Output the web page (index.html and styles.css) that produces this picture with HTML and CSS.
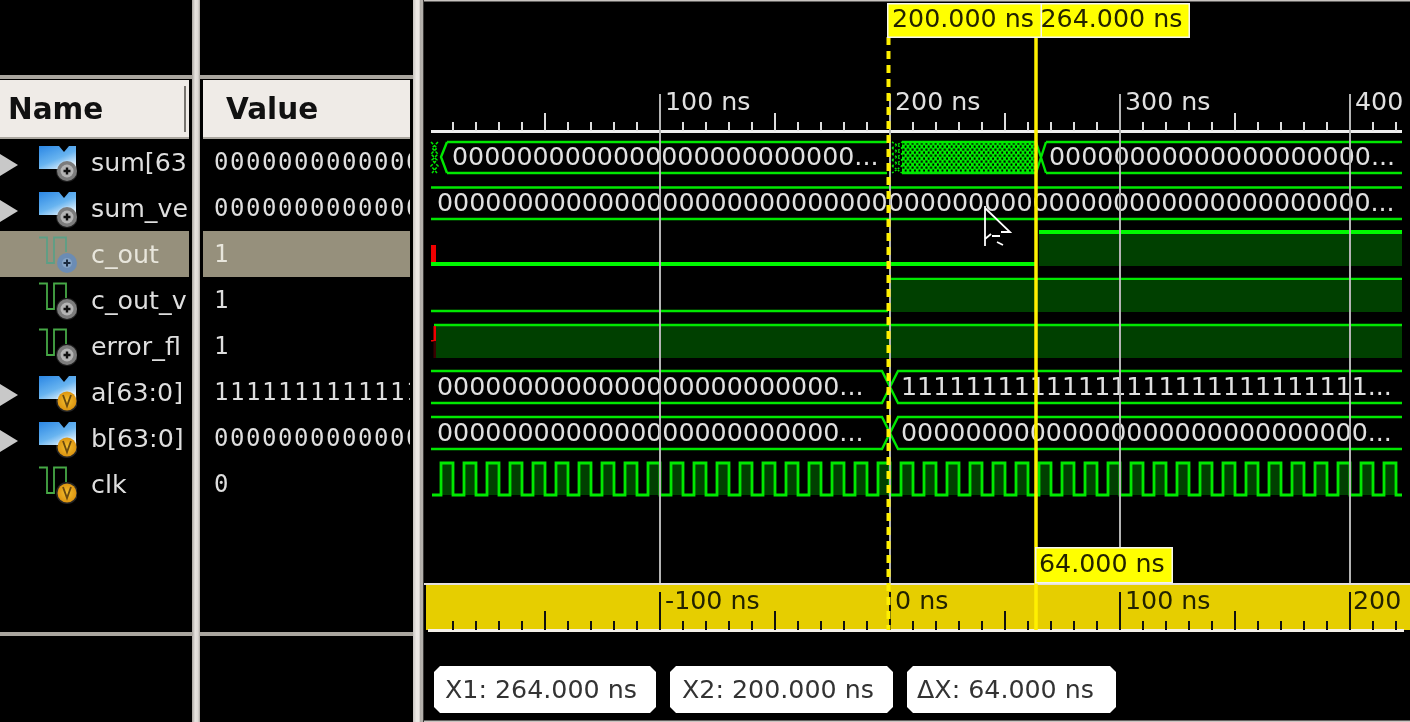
FILE: index.html
```html
<!DOCTYPE html>
<html lang="en">
<head>
<meta charset="utf-8">
<title>Waveform viewer</title>
<link rel="stylesheet" href="styles.css">
</head>
<body>
<svg class="defs" width="0" height="0" aria-hidden="true">
  <defs>
    <linearGradient id="blue" x1="0" y1="0" x2="0.7" y2="1">
      <stop offset="0" stop-color="#2a86e4"/>
      <stop offset="0.6" stop-color="#68b4f0"/>
      <stop offset="1" stop-color="#e4f2fc"/>
    </linearGradient>
    <radialGradient id="amber"><stop offset="0" stop-color="#f4c030"/><stop offset="1" stop-color="#dc9410"/></radialGradient>
    <symbol id="bus" viewBox="0 0 38 38"><path d="M0 2H20L25 8L30 2H37V25H0Z" fill="url(#blue)"/></symbol>
    <symbol id="pulse" viewBox="0 0 38 38"><path d="M0 1.500H8V27H15V1.500H27V16" fill="none" stroke="#46a846" stroke-width="1.800"/></symbol>
    <symbol id="pulse-sel" viewBox="0 0 38 38"><path d="M0 1.500H8V27H15V1.500H27V16" fill="none" stroke="#5c9f86" stroke-width="1.800"/></symbol>
    <symbol id="plus" viewBox="0 0 38 38"><circle cx="28" cy="27" r="11" fill="#fff" opacity="0.120"/><circle cx="28" cy="27" r="10" fill="#7c7c7c"/><circle cx="28" cy="27" r="6.500" fill="#b4b4b4"/><path d="M24.500 27H31.500M28 23.500V30.500" stroke="#101010" stroke-width="2.400"/></symbol>
    <symbol id="plus-sel" viewBox="0 0 38 38"><circle cx="28" cy="27" r="10" fill="#6b8cb4"/><circle cx="28" cy="27" r="5" fill="#86a4c6"/><path d="M24.500 27H31.500M28 23.500V30.500" stroke="#1c2c40" stroke-width="2"/></symbol>
    <symbol id="in" viewBox="0 0 38 38"><circle cx="28" cy="27" r="11" fill="#fff" opacity="0.150"/><circle cx="28" cy="27" r="9.500" fill="url(#amber)"/><path d="M24 21L28 32L32 21" fill="none" stroke="#6a4a10" stroke-width="1.800"/></symbol>
  </defs>
</svg>
<main class="app">
  <section class="col col-names">
    <div class="hline"></div>
    <header class="head head-name"><span>Name</span><i class="head-sep"></i></header>
    <div class="row"><i class="arrow"></i><svg class="ico"><use href="#bus"/><use href="#plus"/></svg><span class="name">sum[63</span></div>
    <div class="row"><i class="arrow"></i><svg class="ico"><use href="#bus"/><use href="#plus"/></svg><span class="name">sum_ve</span></div>
    <div class="row sel"><i class="noarrow"></i><svg class="ico"><use href="#pulse-sel"/><use href="#plus-sel"/></svg><span class="name">c_out</span></div>
    <div class="row"><i class="noarrow"></i><svg class="ico"><use href="#pulse"/><use href="#plus"/></svg><span class="name">c_out_v</span></div>
    <div class="row"><i class="noarrow"></i><svg class="ico"><use href="#pulse"/><use href="#plus"/></svg><span class="name">error_fl</span></div>
    <div class="row"><i class="arrow"></i><svg class="ico"><use href="#bus"/><use href="#in"/></svg><span class="name">a[63:0]</span></div>
    <div class="row"><i class="arrow"></i><svg class="ico"><use href="#bus"/><use href="#in"/></svg><span class="name">b[63:0]</span></div>
    <div class="row"><i class="noarrow"></i><svg class="ico"><use href="#pulse"/><use href="#in"/></svg><span class="name">clk</span></div>
    <div class="foot"></div>
  </section>
  <div class="split"></div>
  <section class="col col-values">
    <div class="hline"></div>
    <header class="head head-value"><span>Value</span></header>
    <div class="row val">00000000000000</div>
    <div class="row val">00000000000000</div>
    <div class="row val sel">1</div>
    <div class="row val">1</div>
    <div class="row val">1</div>
    <div class="row val">11111111111111</div>
    <div class="row val">00000000000000</div>
    <div class="row val">0</div>
    <div class="foot"></div>
  </section>
  <div class="split split-wide"></div>
  <section class="wave">
    <svg class="plot" viewBox="424 0 986 722" width="986" height="722" role="img" aria-label="Waveforms">
      <defs>
        <pattern id="clk" patternUnits="userSpaceOnUse" x="437" y="461" width="23" height="36">
          <rect x="4" y="2" width="12" height="32" class="fill-dark"/>
          <path d="M0 34H4V2H16V34H23" class="tr clk-line"/>
        </pattern>
        <pattern id="hatch" patternUnits="userSpaceOnUse" x="902" y="142" width="4.600" height="6">
          <rect width="4.600" height="6" class="fill-green"/>
          <rect x="0.400" y="0.500" width="2" height="2.200" class="fill-black"/>
          <rect x="2.700" y="3.500" width="2" height="2.200" class="fill-black"/>
        </pattern>
      </defs>

      <path class="frame" d="M424 0.750H1410M424 721.250H1410"/>

      <!-- time axis -->
      <path class="axis" d="M431 131.500H1402"/>
      <path class="tick" d="M452 126.500H1402" stroke-dasharray="2 21"/>
      <path class="tick-major" d="M545 113V131M775 113V131M1005 113V131M1235 113V131"/>
      <text class="t" x="665" y="110">100 ns</text>
      <text class="t" x="895" y="110">200 ns</text>
      <text class="t" x="1125" y="110">300 ns</text>
      <text class="t" x="1355" y="110">400</text>

      <!-- sum[63:0] -->
      <path class="tr" d="M447 142H887M447 173H887M447 142L441 157L447 173"/>
      <path class="tr thin" d="M431 142L437 148L431 154L437 160L431 166L437 173M438 142L432 148L438 154L432 160L438 166L432 173"/>
      <rect x="902" y="141" width="134" height="33" fill="url(#hatch)"/>
      <path class="tr thin dots" d="M892 148L902 142M892 154L902 148M892 160L902 154M892 166L902 160M892 173L902 166M892 142L902 148M892 148L902 154M892 154L902 160M892 160L902 166M892 166L902 173"/>
      <path class="tr" d="M902 142H1036M902 173H1036M1046 142H1402M1046 173H1402M1036 142L1046 173M1036 173L1046 142"/>
      <text class="t" x="452" y="165">0000000000000000000000000...</text>
      <text class="t" x="1049" y="165">00000000000000000000...</text>

      <!-- sum_vector -->
      <path class="tr" d="M431 187.500H1402M431 219H1402"/>
      <text class="t" x="437" y="211">0000000000000000000000000000000000000000000000000000000000...</text>

      <!-- c_out -->
      <rect x="431" y="245" width="5" height="17" class="fill-red"/>
      <rect x="431" y="262" width="604" height="4" class="fill-bright"/>
      <rect x="1039" y="234" width="363" height="32" class="fill-dark"/>
      <rect x="1039" y="230" width="363" height="4" class="fill-bright"/>

      <!-- c_out_v -->
      <path class="tr" d="M431 311H888M890 279H1402"/>
      <rect x="890" y="280" width="512" height="32" class="fill-dark"/>

      <!-- error_flag -->
      <rect x="436" y="326" width="966" height="32" class="fill-dark"/>
      <path class="tr" d="M434 325H1402"/>
      <rect x="433.500" y="326" width="2.500" height="15" class="fill-red"/>
      <rect x="431" y="340" width="5" height="1.500" class="fill-red"/>
      <rect x="433.500" y="341" width="2.500" height="17" class="fill-dimred"/>

      <!-- a[63:0] -->
      <path class="tr" d="M431 371H882L898 403H1402M431 403H882L898 371H1402"/>
      <text class="t" x="437" y="395">0000000000000000000000000...</text>
      <text class="t" x="901" y="395">11111111111111111111111111111...</text>

      <!-- b[63:0] -->
      <path class="tr" d="M431 417H882L898 449H1402M431 449H882L898 417H1402"/>
      <text class="t" x="437" y="441">0000000000000000000000000...</text>
      <text class="t" x="901" y="441">00000000000000000000000000000...</text>

      <!-- clk -->
      <rect x="432" y="461" width="970" height="36" fill="url(#clk)"/>

      <!-- grid lines -->
      <path class="grid" d="M660 94V585M890 94V585M1120 94V585M1350 94V585"/>

      <!-- delta ruler -->
      <path class="ruler-top" d="M424 584H1410"/>
      <rect x="426" y="585" width="984" height="45" class="fill-ruler"/>
      <path class="ruler-base" d="M428 630.500H1404"/>
      <path class="ruler-tick" d="M452 625.500H1402" stroke-dasharray="2 21"/>
      <path class="ruler-major" d="M545 611V630M775 611V630M1005 611V630M1235 611V630M660 592V630M890 592V630M1120 592V630M1350 592V630"/>
      <text class="t dark" x="665" y="609">-100 ns</text>
      <text class="t dark" x="895" y="609">0 ns</text>
      <text class="t dark" x="1125" y="609">100 ns</text>
      <text class="t dark" x="1353" y="609">200</text>

      <!-- cursors -->
      <path class="cursor dash" d="M888.500 37V630"/>
      <path class="cursor" d="M1036 37V630"/>

      <!-- mouse pointer -->
      <path class="mouse" d="M985 206V246M985 208L1010 232H1001M985 239L991 234M992 236L1000 236M997 242L1003 245"/>

      <!-- cursor labels -->
      <rect x="1036.750" y="3.750" width="152.500" height="33.500" class="tag"/>
      <text class="t dark" x="1040.500" y="27">264.000 ns</text>
      <rect x="887.750" y="3.750" width="153.500" height="33.500" class="tag"/>
      <text class="t dark" x="892" y="27">200.000 ns</text>
      <rect x="1035.750" y="547.750" width="136.500" height="35" class="tag"/>
      <text class="t dark" x="1039" y="572">64.000 ns</text>

      <!-- readouts -->
      <path class="pill" d="M440 666H650L656 672V707L650 713H440L434 707V672Z"/>
      <path class="pill" d="M676 666H887L893 672V707L887 713H676L670 707V672Z"/>
      <path class="pill" d="M913 666H1110L1116 672V707L1110 713H913L907 707V672Z"/>
      <text class="t ink" x="445" y="698">X1: 264.000 ns</text>
      <text class="t ink" x="682" y="698">X2: 200.000 ns</text>
      <text class="t ink" x="917" y="698">ΔX: 64.000 ns</text>
    </svg>
  </section>
</main>
</body>
</html>
```
FILE: styles.css
```css
html, body {
  margin: 0;
  padding: 0;
  background: #000;
}
.defs {
  position: absolute;
}
.app {
  display: flex;
  width: 1410px;
  height: 722px;
  overflow: hidden;
  background: #000;
  font-family: "DejaVu Sans", sans-serif;
  filter: blur(0.5px);
}
.col {
  display: flex;
  flex-direction: column;
  padding-top: 75px;
  box-sizing: border-box;
  height: 722px;
}
.col-names {
  width: 192px;
}
.col-values {
  width: 213px;
}
.split {
  width: 8px;
  background: linear-gradient(90deg, #a8a49f, #e6e2de 40%, #dcd8d4 75%, #a8a49f);
}
.split-wide {
  width: 11px;
  background: linear-gradient(90deg, #c8c4c0, #ece8e4 30%, #ece8e4 55%, #a8a49f 70%, #c4c0bb 85%, #000);
}
.hline {
  height: 4px;
  flex: none;
  background: #aaa69f;
}
.head {
  flex: none;
  box-sizing: border-box;
  height: 59px;
  margin: 1px 3px 0 0;
  display: flex;
  align-items: center;
  background: #efebe7;
  border-bottom: 2px solid #aaa69f;
  color: #111;
  font-size: 29.500px;
  font-weight: 700;
}
.head-name {
  padding-left: 8px;
  justify-content: space-between;
}
.head-value {
  margin-left: 3px;
  padding-left: 23px;
}
.head-sep {
  width: 2px;
  height: 46px;
  margin-right: 3px;
  background: #77736e;
}
.row {
  flex: none;
  display: flex;
  align-items: center;
  height: 46px;
  margin-right: 3px;
  overflow: hidden;
  white-space: nowrap;
  color: #dedede;
  font-size: 25.300px;
}
.sel {
  background: #96907c;
  color: #e8e6dc;
}
.arrow {
  flex: none;
  width: 0;
  height: 0;
  margin-right: 22px;
  border-style: solid;
  border-width: 11px 0 11px 18px;
  border-color: transparent transparent transparent #c8c8c8;
  transform: translateY(3px);
}
.noarrow {
  flex: none;
  width: 40px;
}
.ico {
  flex: none;
  width: 38px;
  height: 38px;
  margin: 2px 14px 0 -1px;
}
.name {
  flex: none;
  padding-top: 1px;
}
.val {
  margin-left: 3px;
  padding-left: 11px;
  font-family: "DejaVu Sans Mono", monospace;
  font-size: 24px;
  letter-spacing: 1.550px;
}
.foot {
  flex: none;
  height: 90px;
  margin-top: auto;
  box-sizing: border-box;
  border-top: 4px solid #aaa69f;
}
.wave {
  flex: 1;
}
.plot {
  display: block;
  background: #000;
}
.frame {
  stroke: #c8c4c0;
  stroke-width: 1.500;
}
.t {
  font-family: "DejaVu Sans", sans-serif;
  font-size: 25.300px;
  fill: #e0e0e0;
}
.dark {
  fill: #222200;
}
.ink {
  fill: #333;
}
.tr {
  fill: none;
  stroke: #00e800;
  stroke-width: 2.400;
}
.clk-line {
  stroke-width: 2.800;
}
.thin {
  stroke-width: 1.500;
  stroke-dasharray: 3 1.500;
}
.dots {
  stroke-dasharray: 2 1.500;
}
.axis {
  stroke: #eee;
  stroke-width: 3;
}
.tick {
  stroke: #ddd;
  stroke-width: 9;
}
.tick-major {
  stroke: #ddd;
  stroke-width: 2;
}
.grid {
  stroke: #b4b4b4;
  stroke-width: 2;
}
.ruler-top {
  stroke: #e4e0dc;
  stroke-width: 2;
}
.ruler-base {
  stroke: #f4f0e8;
  stroke-width: 3;
}
.ruler-tick {
  stroke: #111;
  stroke-width: 9;
}
.ruler-major {
  stroke: #111;
  stroke-width: 2;
}
.fill-ruler {
  fill: #e6ce00;
}
.fill-dark {
  fill: #004000;
}
.fill-green {
  fill: #00f000;
}
.fill-black {
  fill: #000;
}
.fill-bright {
  fill: #00f800;
}
.fill-red {
  fill: #f00000;
}
.fill-dimred {
  fill: #3a0000;
}
.cursor {
  stroke: #fff000;
  stroke-width: 3.500;
}
.dash {
  stroke-width: 4;
  stroke-dasharray: 8 6;
}
.mouse {
  fill: none;
  stroke: #fff;
  stroke-width: 1.800;
}
.tag {
  fill: #ffff00;
  stroke: #f4f4f0;
  stroke-width: 1.500;
}
.pill {
  fill: #fff;
}
```
